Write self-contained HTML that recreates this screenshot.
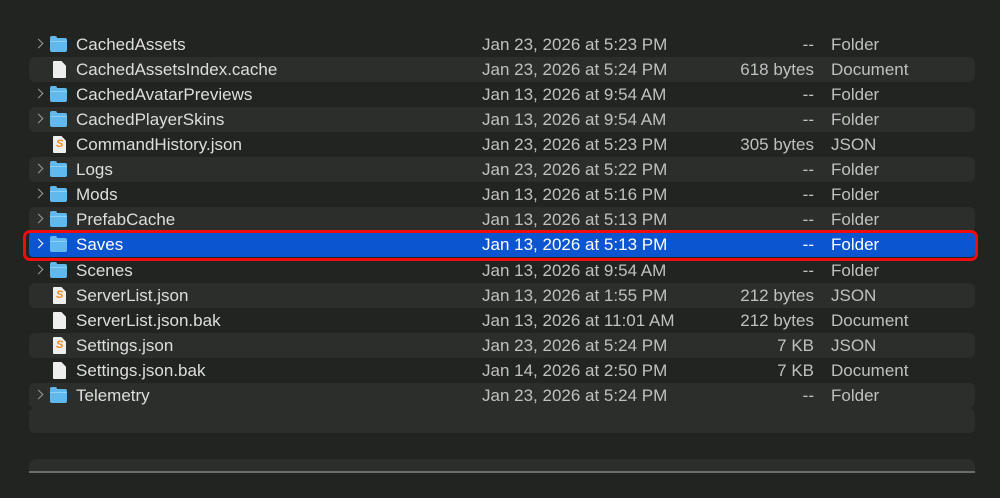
<!DOCTYPE html>
<html><head><meta charset="utf-8"><style>
*{margin:0;padding:0;box-sizing:border-box}
body{width:1000px;height:498px;background:#212420;font-family:"Liberation Sans",sans-serif;font-size:17px;color:#dedede;position:relative;overflow:hidden}
.row{position:absolute;left:29px;width:946px;height:25px}
.s{background:#2b2e2b;border-radius:6px}
.t{position:absolute;top:3px;white-space:nowrap;line-height:20px}
.n{left:47px}.d{left:453px;color:#c0c0c0}.z{right:161px;color:#c0c0c0;text-align:right}.k{left:802px;color:#c0c0c0}
.ch{position:absolute;left:6px;top:8px;width:7px;height:7px;border-right:1.6px solid #9a9a9a;border-top:1.6px solid #9a9a9a;transform:rotate(45deg)}
.fo{position:absolute;left:21px;top:6px;width:17px;height:14px;background:#5fb8ee;border-radius:2px}
.fo:before{content:"";position:absolute;left:0;top:-2px;width:7px;height:3px;background:#5fb8ee;border-radius:2px 2px 0 0}
.fo:after{content:"";position:absolute;left:0;top:3px;width:17px;height:1px;background:#8fd0f5}
.doc{position:absolute;left:24px;top:4px;width:13px;height:17px;background:#eeeeee;border-radius:1px;clip-path:polygon(0 0,65% 0,100% 28%,100% 100%,0 100%)}
.js:after{content:"S";position:absolute;left:3px;top:2px;font-size:11px;font-weight:bold;color:#f08a1c}
.sel{background:#0b55d1;color:#fff}
.sel .t{color:#fff}
.box{position:absolute;left:23px;top:230px;width:955px;height:31px;border:3.5px solid #f20d0d;border-radius:7px}
</style></head><body>
<div class="row" style="top:32px"><i class="ch"></i><i class="fo"></i><span class="t n">CachedAssets</span><span class="t d">Jan 23, 2026 at 5:23 PM</span><span class="t z">--</span><span class="t k">Folder</span></div>
<div class="row s" style="top:57px"><i class="doc"></i><span class="t n">CachedAssetsIndex.cache</span><span class="t d">Jan 23, 2026 at 5:24 PM</span><span class="t z">618 bytes</span><span class="t k">Document</span></div>
<div class="row" style="top:82px"><i class="ch"></i><i class="fo"></i><span class="t n">CachedAvatarPreviews</span><span class="t d">Jan 13, 2026 at 9:54 AM</span><span class="t z">--</span><span class="t k">Folder</span></div>
<div class="row s" style="top:107px"><i class="ch"></i><i class="fo"></i><span class="t n">CachedPlayerSkins</span><span class="t d">Jan 13, 2026 at 9:54 AM</span><span class="t z">--</span><span class="t k">Folder</span></div>
<div class="row" style="top:132px"><i class="doc js"></i><span class="t n">CommandHistory.json</span><span class="t d">Jan 23, 2026 at 5:23 PM</span><span class="t z">305 bytes</span><span class="t k">JSON</span></div>
<div class="row s" style="top:157px"><i class="ch"></i><i class="fo"></i><span class="t n">Logs</span><span class="t d">Jan 23, 2026 at 5:22 PM</span><span class="t z">--</span><span class="t k">Folder</span></div>
<div class="row" style="top:182px"><i class="ch"></i><i class="fo"></i><span class="t n">Mods</span><span class="t d">Jan 13, 2026 at 5:16 PM</span><span class="t z">--</span><span class="t k">Folder</span></div>
<div class="row s" style="top:207px"><i class="ch"></i><i class="fo"></i><span class="t n">PrefabCache</span><span class="t d">Jan 13, 2026 at 5:13 PM</span><span class="t z">--</span><span class="t k">Folder</span></div>
<div class="row sel" style="top:232px;border-radius:4px"><i class="ch" style="border-color:#fff"></i><i class="fo"></i><span class="t n">Saves</span><span class="t d">Jan 13, 2026 at 5:13 PM</span><span class="t z">--</span><span class="t k">Folder</span></div>
<div class="box"></div>
<div class="row" style="top:258px"><i class="ch"></i><i class="fo"></i><span class="t n">Scenes</span><span class="t d">Jan 13, 2026 at 9:54 AM</span><span class="t z">--</span><span class="t k">Folder</span></div>
<div class="row s" style="top:283px"><i class="doc js"></i><span class="t n">ServerList.json</span><span class="t d">Jan 13, 2026 at 1:55 PM</span><span class="t z">212 bytes</span><span class="t k">JSON</span></div>
<div class="row" style="top:308px"><i class="doc"></i><span class="t n">ServerList.json.bak</span><span class="t d">Jan 13, 2026 at 11:01 AM</span><span class="t z">212 bytes</span><span class="t k">Document</span></div>
<div class="row s" style="top:333px"><i class="doc js"></i><span class="t n">Settings.json</span><span class="t d">Jan 23, 2026 at 5:24 PM</span><span class="t z">7 KB</span><span class="t k">JSON</span></div>
<div class="row" style="top:358px"><i class="doc"></i><span class="t n">Settings.json.bak</span><span class="t d">Jan 14, 2026 at 2:50 PM</span><span class="t z">7 KB</span><span class="t k">Document</span></div>
<div class="row s" style="top:383px"><i class="ch"></i><i class="fo"></i><span class="t n">Telemetry</span><span class="t d">Jan 23, 2026 at 5:24 PM</span><span class="t z">--</span><span class="t k">Folder</span></div>
<div class="row" style="top:408px;background:#2b2e2b;border-radius:6px"></div>
<div style="position:absolute;left:29px;top:459px;width:946px;height:14px;background:#2b2e2b;border-radius:7px 7px 0 0;border-bottom:2px solid #6a6d6a"></div>
</body></html>
